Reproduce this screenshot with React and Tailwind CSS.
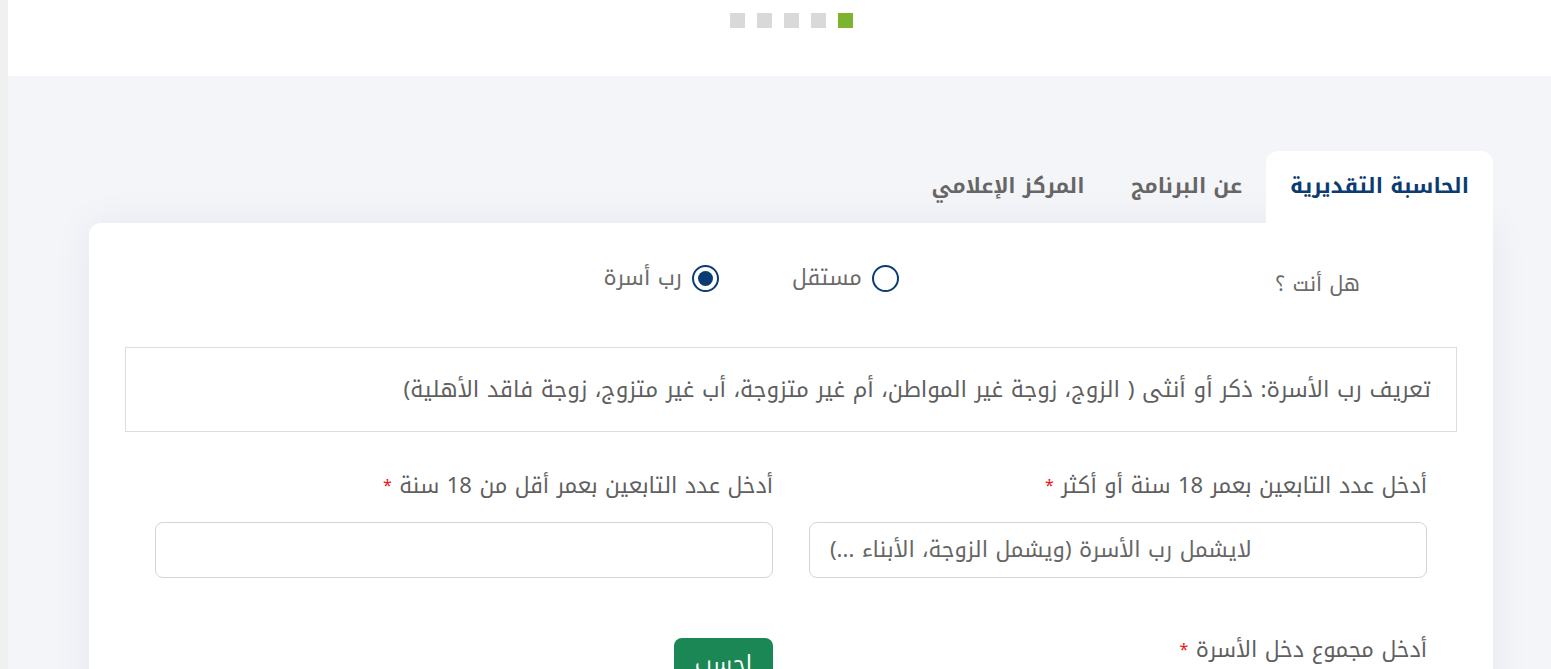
import React from "react";

const font = { fontFamily: '"Noto Kufi Arabic", "Noto Sans Arabic", "DejaVu Sans", sans-serif' };

function Radio({ checked, label }) {
  return (
    <div className="flex items-center gap-[10px]">
      <span className="w-[27px] h-[27px] rounded-full border-[2.5px] border-[#0b3b73] flex items-center justify-center">
        {checked && <span className="w-[15px] h-[15px] rounded-full bg-[#0b3b73]" />}
      </span>
      <span className="text-[22px] text-[#6b6b6b]">{label}</span>
    </div>
  );
}

function Label({ children }) {
  return (
    <div className="text-[22px] text-[#5f5f5f] leading-[28px] mb-[22px]">
      {children} <span className="text-[#e11] text-[16px] align-top">*</span>
    </div>
  );
}

export default function App() {
  return (
    <div className="w-[1551px] h-[669px] overflow-hidden flex" style={font}>
      <div className="w-[8px] bg-[#f0f0f0] shrink-0" />
      <div className="flex-1 flex flex-col">
        <div className="h-[76px] bg-white flex justify-center pt-[13px] pl-[24px] gap-[12px] shrink-0">
          {[0, 1, 2, 3].map((i) => (
            <span key={i} className="w-[15px] h-[15px] bg-[#d9d9d9]" />
          ))}
          <span className="w-[15px] h-[15px] bg-[#7cb32f]" />
        </div>
        <div className="flex-1 bg-[#f4f5f9] pt-[75px]">
          <div className="ml-[81px] w-[1404px]" dir="rtl">
            <div className="flex h-[72px]">
              <div className="w-[227px] bg-white rounded-t-[12px] flex items-center justify-center text-[21px] font-bold text-[#0b3b73]">
                الحاسبة التقديرية
              </div>
              <div className="w-[159px] flex items-center justify-center text-[21px] font-bold text-[#666]">
                عن البرنامج
              </div>
              <div className="w-[198px] flex items-center justify-center text-[21px] font-bold text-[#666]">
                المركز الإعلامي
              </div>
            </div>
            <div className="bg-white rounded-tl-[12px] shadow-[0_0_40px_rgba(30,40,90,0.06)] h-[500px]">
              <div className="flex items-center pt-[40px] pr-[133px] h-[70px]">
                <div className="w-[461px] text-[21px] text-[#6b6b6b] pt-[14px]">هل أنت ؟</div>
                <div className="w-[180px]">
                  <Radio label="مستقل" />
                </div>
                <Radio checked label="رب أسرة" />
              </div>
              <div className="mx-[36px] mt-[54px] h-[85px] border border-[#dcdde3] flex items-center pr-[25px] text-[22.5px] text-[#5f5f5f]">
                تعريف رب الأسرة: ذكر أو أنثى ( الزوج، زوجة غير المواطن، أم غير متزوجة، أب غير متزوج، زوجة فاقد الأهلية)
              </div>
              <div className="px-[66px] grid grid-cols-2 gap-x-[36px] pt-[40px]">
                <div>
                  <Label>أدخل عدد التابعين بعمر 18 سنة أو أكثر</Label>
                  <input
                    dir="rtl"
                    className="w-full h-[56px] rounded-[8px] border border-[#d2d4da] px-[20px] text-left text-[22px] placeholder:text-[#666] outline-none"
                    placeholder="لايشمل رب الأسرة (ويشمل الزوجة، الأبناء ...)"
                    style={font}
                  />
                </div>
                <div>
                  <Label>أدخل عدد التابعين بعمر أقل من 18 سنة</Label>
                  <input
                    className="w-full h-[56px] rounded-[8px] border border-[#d2d4da] px-[20px] text-[20px] outline-none"
                    style={font}
                  />
                </div>
                <div className="pt-[58px]">
                  <Label>أدخل مجموع دخل الأسرة</Label>
                </div>
                <div className="pt-[60px] flex justify-start">
                  <button className="w-[99px] h-[50px] rounded-[8px] bg-[#1a8754] text-white text-[22px] flex justify-center pt-[10px]" style={font}>
                    احسب
                  </button>
                </div>
              </div>
            </div>
          </div>
        </div>
      </div>
    </div>
  );
}
